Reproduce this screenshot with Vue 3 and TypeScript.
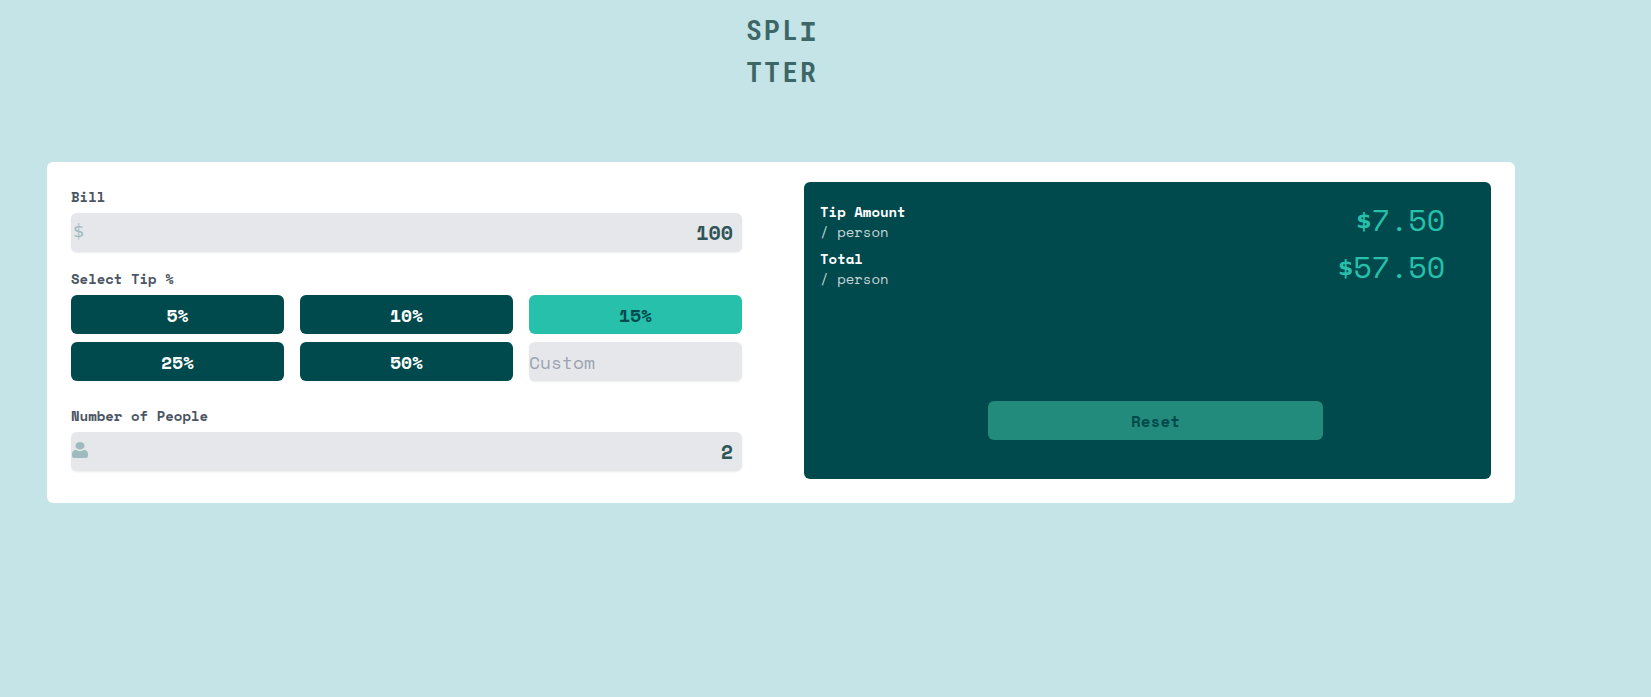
<script setup lang="ts">
import { computed, ref } from 'vue'

const bill = ref('100')
const people = ref('2')
const custom = ref('')
const tips = [5, 10, 15, 25, 50]
const selected = ref<number | null>(15)
const logoLetters = [...'SPLITTER']

const rate = computed(() => (custom.value ? Number(custom.value) : selected.value ?? 0) || 0)
const count = computed(() => Math.max(1, Number(people.value) || 1))
const tipEach = computed(() => ((Number(bill.value) || 0) * rate.value) / 100 / count.value)
const totalEach = computed(() => (Number(bill.value) || 0) / count.value + tipEach.value)

function pick(tip: number) {
  selected.value = tip
  custom.value = ''
}

function reset() {
  bill.value = ''
  people.value = ''
  custom.value = ''
  selected.value = null
}
</script>

<template>
  <div class="page">
    <h1 class="logo">
      <span v-for="(letter, i) in logoLetters" :key="i" :class="{ slab: letter === 'I' }">{{ letter }}</span>
    </h1>
    <main class="card">
      <form class="form" @submit.prevent>
        <div class="group">
          <label for="bill">Bill</label>
          <div class="field">
            <span class="icon dollar" aria-hidden="true">$</span>
            <input id="bill" v-model="bill" class="control amount" type="text" inputmode="decimal" />
          </div>
        </div>
        <fieldset class="group tip-group">
          <legend>Select Tip %</legend>
          <div class="tips">
            <button
              v-for="tip in tips"
              :key="tip"
              type="button"
              class="control tip"
              :class="{ active: tip === selected }"
              :aria-pressed="tip === selected"
              @click="pick(tip)"
            >{{ tip }}%</button>
            <input v-model="custom" class="control custom" type="text" placeholder="Custom" aria-label="Custom tip percentage" />
          </div>
        </fieldset>
        <div class="group">
          <label for="people">Number of People</label>
          <div class="field">
            <svg class="icon" width="16" height="16" viewBox="0 0 16 16" aria-hidden="true">
              <ellipse cx="8" cy="3.8" rx="4.5" ry="3.8" />
              <path d="M4 7.8C5 8.6 6.3 9 8 9s3-.4 4-1.200c2.600.2 4 2 4 4.400v1.200c0 1.600-.9 2.600-2.500 2.600h-11C.9 16 0 15 0 13.400v-1.200C0 9.800 1.400 8 4 7.800Z" />
            </svg>
            <input id="people" v-model="people" class="control amount" type="text" inputmode="numeric" />
          </div>
        </div>
      </form>
      <section class="panel" aria-label="Result">
        <div class="result">
          <p><strong>Tip Amount</strong><span>/ person</span></p>
          <output><b>$</b>{{ tipEach.toFixed(2) }}</output>
        </div>
        <div class="result">
          <p><strong>Total</strong><span>/ person</span></p>
          <output><b>$</b>{{ totalEach.toFixed(2) }}</output>
        </div>
        <button type="button" class="control reset" @click="reset">Reset</button>
      </section>
    </main>
  </div>
</template>

<style>
body {
  margin: 0;
  background: #c5e4e7;
}
</style>

<style scoped>
* {
  box-sizing: border-box;
}

.page {
  min-height: 100vh;
  padding: 10px 136px 24px 47px;
  font-family: "Space Mono", "Liberation Mono", monospace;
  font-size: 14px;
  line-height: 20px;
}

.logo {
  display: grid;
  grid-template-columns: repeat(4, 18px);
  grid-auto-rows: 42px;
  justify-content: center;
  justify-items: center;
  margin: 0 0 68px;
  color: #3d6666;
  font-family: "Roboto Condensed", "Liberation Sans Narrow", "Liberation Mono", monospace;
  font-size: 28px;
  font-weight: 600;
  line-height: 42px;
}

.slab {
  font-family: "Space Mono", "Liberation Mono", monospace;
}

.card {
  display: grid;
  grid-template-columns: 671fr 687fr;
  gap: 62px;
  padding: 20px 24px 24px;
  border-radius: 6px;
  background: #fff;
}

.form {
  display: flex;
  flex-direction: column;
  min-width: 0;
  padding: 5px 0 8px;
}

.group {
  min-width: 0;
  margin: 0;
  padding: 0;
  border: 0;
}

.tip-group {
  margin: 17px 0 25px;
}

label,
legend {
  display: block;
  margin-bottom: 6px;
  padding: 0;
  color: #4b5563;
  font-weight: 700;
}

.field {
  position: relative;
}

.icon {
  position: absolute;
  top: 10px;
  left: 1px;
  fill: #9ebbbd;
}

.dollar {
  top: 8px;
  left: 2px;
  color: #9ebbbd;
  font-family: "DejaVu Sans", sans-serif;
  font-size: 18px;
}

.control {
  display: block;
  width: 100%;
  min-width: 0;
  height: 39px;
  margin: 0;
  padding: 0;
  border: 0;
  border-radius: 6px;
  font-family: inherit;
  font-size: 18px;
  font-weight: 700;
}

.amount,
.custom {
  background: #e5e7eb;
  color: #2f5557;
  box-shadow: 0 1px 2px rgb(0 0 0 / 8%);
}

.amount {
  padding: 0 9px;
  font-size: 20px;
  text-align: right;
}

.custom {
  font-weight: 400;
}

.custom::placeholder {
  color: #9ca3af;
  opacity: 1;
}

.tips {
  display: grid;
  grid-template-columns: repeat(3, minmax(0, 1fr));
  gap: 8px 16px;
}

.tip {
  background: #00494d;
  color: #fff;
  cursor: pointer;
}

.tip.active {
  background: #26c0ab;
  color: #00494d;
}

.panel {
  display: flex;
  flex-direction: column;
  gap: 7px;
  min-width: 0;
  padding: 20px 0 39px 16px;
  border-radius: 6px;
  background: #00494d;
}

.result {
  display: flex;
  justify-content: space-between;
  height: 40px;
  padding-right: 46px;
}

.result p {
  margin: 0;
}

.result strong,
.result span {
  display: block;
}

.result strong {
  color: #fff;
}

.result span {
  color: #c9d6d8;
}

.result output {
  color: #26c0ab;
  font-size: 30px;
  line-height: 36px;
}

.result b {
  font-family: "DejaVu Sans", sans-serif;
  font-size: 22px;
  line-height: 20px;
  vertical-align: 3px;
}

.reset {
  align-self: center;
  width: 50%;
  margin-top: auto;
  background: #228b7c;
  color: #00494d;
  font-size: 16px;
  cursor: pointer;
}
</style>
